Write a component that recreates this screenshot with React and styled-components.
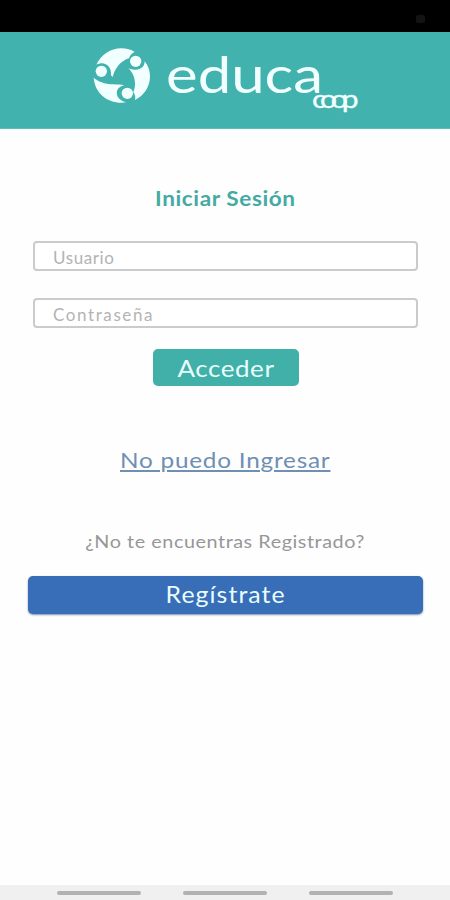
import React from 'react'
import styled, { createGlobalStyle } from 'styled-components'

const GlobalStyle = createGlobalStyle`
    * {
        box-sizing: border-box;
    }
    body {
        margin: 0;
        background-color: #fefefe;
        font-family: Lato, 'Open Sans', sans-serif;
    }
`
const Screen = styled.div`
    width: 100%;
    height: 100vh;
    display: flex;
    flex-direction: column;
    background-color: #fefefe;
    overflow: hidden;
`
const StatusBar = styled.div`
    height: 32px;
    flex-shrink: 0;
    display: flex;
    justify-content: flex-end;
    padding: 15px 25px 0 0;
    background-color: #000;
`
const StatusMark = styled.div`
    width: 9px;
    height: 8px;
    border-radius: 2px;
    background-color: #131313;
`
const Header = styled.header`
    height: 97px;
    flex-shrink: 0;
    display: flex;
    justify-content: center;
    background-color: #41b2ae;
    border-bottom: 1px solid #5fbcb9;
`
const Form = styled.form`
    flex: 1;
    display: flex;
    flex-direction: column;
    align-items: center;
    padding: 55px 27px 0 28px;
`
const Wide = styled.span`
    display: inline-block;
    transform: scaleX(${props => props.$by});
`
const Title = styled.h1`
    margin: 0 0 29px;
    height: 28px;
    line-height: 28px;
    font-size: 21px;
    font-weight: 700;
    letter-spacing: 0.55px;
    white-space: nowrap;
    color: #45aaa3;
`
const Input = styled.input`
    width: 385px;
    height: 30px;
    margin-bottom: ${props => props.$gap}px;
    padding: 2px 17px 0 18px;
    border: 2px solid #cbcbcb;
    border-radius: 4px;
    background-color: #fff;
    font-family: inherit;
    font-size: 17px;
    letter-spacing: ${props => props.$spacing}px;
    outline: none;

    &::placeholder {
        color: #b3b3b3;
        opacity: 1;
    }
`
const Button = styled.button`
    display: flex;
    align-items: center;
    justify-content: center;
    border: 0;
    padding: 0;
    border-radius: 5px;
    font-family: inherit;
    font-size: 23px;
    font-weight: 400;
    color: #e9fdfd;
    cursor: pointer;
`
const LoginButton = styled(Button)`
    width: 146px;
    height: 37px;
    letter-spacing: 0.5px;
    background-color: #40b0a8;
`
const RegisterButton = styled(Button)`
    width: 395px;
    height: 38px;
    padding-bottom: 2px;
    letter-spacing: 1px;
    background-color: #376eb7;
    box-shadow: 0 1px 2px rgba(40, 70, 120, 0.6);
`
const HelpLink = styled.a`
    margin-top: 60px;
    height: 28px;
    line-height: 28px;
    font-size: 22px;
    letter-spacing: 0.7px;
    white-space: nowrap;
    color: #6f8fb3;

    span {
        text-decoration: underline;
        text-decoration-thickness: 2px;
        text-underline-offset: 2px;
    }
`
const Question = styled.p`
    margin: 55px 0 23px;
    height: 24px;
    line-height: 24px;
    font-size: 18px;
    letter-spacing: 0.5px;
    white-space: nowrap;
    color: #979797;
`
const NavBar = styled.nav`
    height: 15px;
    flex-shrink: 0;
    display: flex;
    justify-content: center;
    gap: 42px;
    padding-top: 6px;
    background-color: #f0f0f0;
`
const NavLine = styled.div`
    width: 84px;
    height: 4px;
    border-radius: 2px;
    background-color: #b2b2b2;
`

const Logo = () => (
    <svg width="450" height="96" viewBox="0 32 450 96" fill="#f2ffff" fontFamily="Lato, sans-serif">
        <g transform="translate(85 40) scale(.3333)">
            <path d="M34 74C49 44 76 25 109 25c16 0 29 4 40 11-8 3-15 10-17 19C108 62 90 84 83 111l-5-5C80 85 69 72 53 70c-8 0-14 2-19 4Z" />
            <path d="M178 63c12 14 17 29 17 46 0 32-18 58-45 71 2-8 1-16-5-23 10-24 6-51-15-73 15 10 43 4 47-10 2-4 2-8 1-11Z" />
            <path d="M26 113c12 11 33 19 58 20 13 1 24 1 34 3-16 3-25 14-22 28 2 9 10 18 28 23-50 7-94-23-98-74Z" />
            <circle cx="152" cy="64" r="17" />
            <circle cx="49" cy="94" r="17" />
            <circle cx="127" cy="160" r="17" />
        </g>
        <text x="166" y="93" fontSize="50" textLength="157" lengthAdjust="spacingAndGlyphs">educa</text>
        <text transform="translate(312 108) scale(1.2 1)" fontSize="25" textLength="38.8" lengthAdjust="spacing" stroke="#f2ffff" strokeWidth=".3">coop</text>
    </svg>
)

const App = () => {
    return (
        <>
            <GlobalStyle />
            <Screen>
                <StatusBar>
                    <StatusMark />
                </StatusBar>
                <Header>
                    <Logo />
                </Header>
                <Form>
                    <Title><Wide $by={1.075}>Iniciar Sesión</Wide></Title>
                    <Input type="text" placeholder="Usuario" $gap={27} $spacing={0.6} />
                    <Input type="password" placeholder="Contraseña" $gap={21} $spacing={1.6} />
                    <LoginButton type="button"><Wide $by={1.13}>Acceder</Wide></LoginButton>
                    <HelpLink href="#"><Wide $by={1.105}>No puedo Ingresar</Wide></HelpLink>
                    <Question><Wide $by={1.1}>¿No te encuentras Registrado?</Wide></Question>
                    <RegisterButton type="button"><Wide $by={1.08}>Regístrate</Wide></RegisterButton>
                </Form>
                <NavBar>
                    <NavLine />
                    <NavLine />
                    <NavLine />
                </NavBar>
            </Screen>
        </>
    )
}

export default App
